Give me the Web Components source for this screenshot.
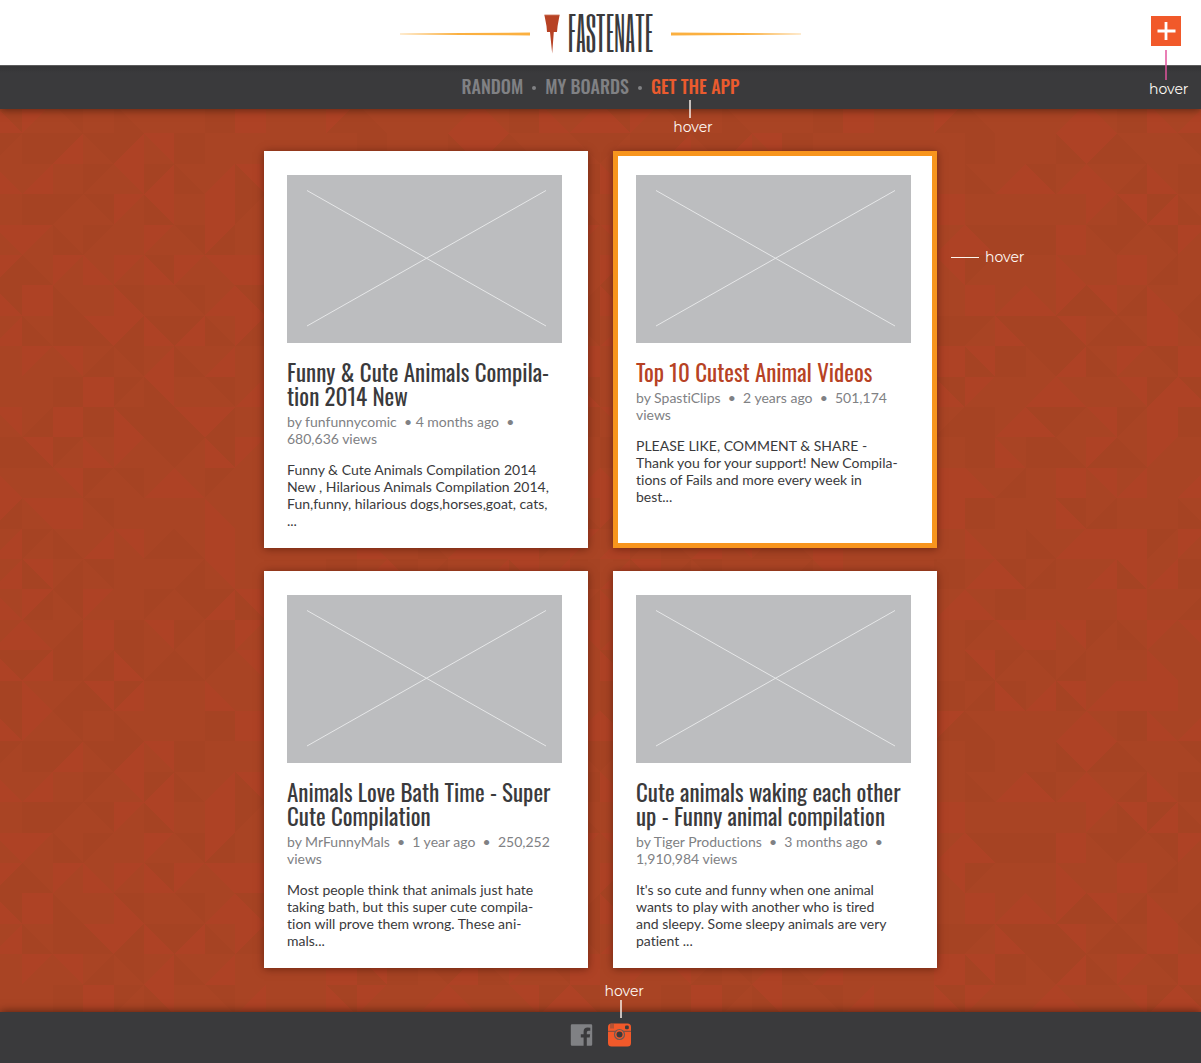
<!DOCTYPE html>
<html lang="en">
<head>
<meta charset="utf-8">
<title>Fastenate</title>
<style>
  html, body { margin: 0; }
  body { font-family: Lato, "Liberation Sans", sans-serif; color: #3a3a3c; }
</style>
</head>
<body>
<fast-page></fast-page>
<script>
const CONDENSED = 'Oswald, "Liberation Sans Narrow", "Roboto Condensed", sans-serif';

function define(name, html, setup) {
  const template = document.createElement('template');
  template.innerHTML = html;
  customElements.define(name, class extends HTMLElement {
    connectedCallback() {
      if (this.shadowRoot) return;
      this.attachShadow({ mode: 'open' }).append(template.content.cloneNode(true));
      if (setup) setup(this, this.shadowRoot);
    }
  });
}

/* Mosaic of triangles, 20 x 20 cells.
   a/b: upper left, lower right.  anb: lower left, upper right.  One letter: plain cell. */
const MOSAIC = [
  'LnD L/M MnD M DnM M M D L M M L/D DnM M M M/L LnM D LnM M/L',
  'D/M D D/L MnD D/L MnL D M M M M M D M M DnL L/D DnM M MnD',
  'LnM M/L M D/M MnL D/L DnM M/L DnL M M M DnM M/L LnD M/L LnM M/D LnM D',
  'M D D/M MnD L/M DnL M L D/M M M L M M M M L/M DnL D/L DnM',
  'MnL L/M DnM D/M M L/M MnD L/D M M M M/L LnD D D L MnD D/M MnD L/M',
  'L/D DnM L/M LnM L/M LnD L/M MnL L M M MnL D/M M M LnM M L M/D M',
  'LnD L DnM M LnD M MnD M/L LnD M M M L M/L LnM L/D DnL M/D LnM M/D',
  'M/L DnM D DnL L/D LnD D/L DnM L/D M M D D/M LnD D DnL M/D DnM L MnD',
  'M L/M MnL M/D MnD M/L DnM M/L M M M L DnL D MnD D/L DnM L/M MnD L',
  'M M D L D/M DnL M MnD M/L M M LnD L/M M M/L LnM M MnL D/L LnD',
  'MnL M/D L D LnD D DnL L/D M M M M/D D M/L LnD D/M MnL D/M L D',
  'D DnL D/M LnM L/M MnD D/M LnD L/M M M M D LnM D DnM L/D DnM L/M M',
  'LnM M MnL D/M MnD M/L LnM D/M M M M L LnM M/D M L MnL M/L M M/L',
  'L/D MnL L MnD M M M LnM M M M L D M M LnD M/D M M DnM',
  'M/L D/M DnM M/L MnL M/D DnM L M M M M LnM M DnM M/L L L D/M L/M',
  'M/L DnL M/D MnD M M M/D MnL M M M D M/L LnD M/D M M/L DnL M/L D',
  'LnM L/D MnD L/M M D/M MnD D/L DnL M M M/L LnM D M M M L M M/D',
  'M/L LnM M/D L D MnL D/M D L/M M M M D/M MnL L MnL D/M DnM L/M MnL',
  'LnD D/L D M/D LnD M/D DnM D/M MnL M M M DnL D/M MnD M/D M M LnM M',
  'D LnM M/D DnL D/L M M LnM M M M D M/D LnD M/L DnL M/L L L M'
];
const SHADES = { D: '#a64323', M: '#a94424', L: '#ae4225' };

function mosaicUrl() {
  let shapes = '';
  MOSAIC.forEach((line, y) => line.split(' ').forEach((cell, x) => {
    const a = SHADES[cell[0]];
    shapes += `<path fill="${a}" d="M${x} ${y}h1v1h-1z"/>`;
    if (cell.length > 1) {
      const d = cell[1] === '/' ? `M${x + 1} ${y}v1h-1z` : `M${x} ${y}h1v1z`;
      shapes += `<path fill="${SHADES[cell[2]]}" d="${d}"/>`;
    }
  }));
  const svg = `<svg xmlns="http://www.w3.org/2000/svg" width="608" height="608" viewBox="0 0 20 20" shape-rendering="crispEdges">${shapes}</svg>`;
  return `url("data:image/svg+xml,${encodeURIComponent(svg)}")`;
}

define('hover-note', `
  <style>
    :host {
      position: absolute; display: flex; flex-direction: column; align-items: center;
      font: 14px/18px Montserrat, Inter, sans-serif; color: #fffaf5; white-space: nowrap;
      --line: rgba(245, 238, 232, .75); pointer-events: none;
    }
    i { background: var(--line); width: 2px; height: var(--length, 18px); margin-right: 6px; }
    :host([side="above"]) { flex-direction: column-reverse; }
    :host([side="right"]) { flex-direction: row; }
    :host([side="right"]) i { width: 28px; height: 1px; background: #fff6ee; }
  </style>
  <i></i><span><slot></slot></span>`);

define('fast-logo', `
  <style>
    :host { display: flex; align-items: center; justify-content: center; }
    .rule { width: 130px; height: 4px; flex: none; }
    a { display: flex; align-items: center; justify-content: center; gap: 8px; width: 141px; color: #3a3a3c; text-decoration: none; }
    .name { font: 45px/40px "Six Caps", ${CONDENSED}; padding: 0 4px 4px 0; }
    .pin { width: 16px; height: 40px; flex: none; }
  </style>
  <svg class="rule" viewBox="0 0 130 4" aria-hidden="true"><path fill="#fbb040" d="M0 1.700 60 1 130 .5v3L60 3 0 2.300z"/></svg>
  <a href="#">
    <svg class="pin" viewBox="0 0 16 40" aria-hidden="true"><path fill="#b74224" d="M.4 1h15.200L13.600 12l-.6 6h-3.200L8.200 39.500 6 18H3L2.500 12z"/><path stroke="#d58a75" stroke-width=".8" d="M.4.900h15.200"/></svg>
    <span class="name">FASTENATE</span>
  </a>
  <svg class="rule" viewBox="0 0 130 4" aria-hidden="true"><path fill="#fbb040" d="M130 1.700 70 1 0 .5v3L70 3l60-.7z"/></svg>`);

define('fast-header', `
  <style>
    :host { display: grid; grid-template-columns: 1fr auto 1fr; height: 65px; background: #fff; }
    fast-logo { grid-column: 2; height: 67px; }
    .add { position: relative; justify-self: end; margin: 16px 20px 0 0; height: 30px; }
    button { display: block; width: 30px; height: 30px; padding: 0; border: 0; background: #f1592a; cursor: pointer; }
    svg { display: block; }
    hover-note { top: 34px; left: -2px; --line: rgba(226, 84, 156, .75); --length: 30px; z-index: 2; }
  </style>
  <fast-logo></fast-logo>
  <div class="add">
    <button aria-label="Add"><svg width="30" height="30" viewBox="0 0 30 30"><path d="M6.500 15h18M15 6v18" stroke="#fff" stroke-width="2.800"/></svg></button>
    <hover-note>hover</hover-note>
  </div>`);

define('fast-nav', `
  <style>
    :host { display: block; position: relative; z-index: 1; background: linear-gradient(#333334, #3a3a3c 8px); box-shadow: 0 1px 8px rgba(40, 15, 5, .6); clip-path: inset(0 0 -30px 0); }
    nav { display: flex; justify-content: center; align-items: center; gap: 9px; height: 43px; border-top: 1px solid #5c5c5d; }
    a { position: relative; font: 500 18px/24px ${CONDENSED}; color: #808184; text-decoration: none; margin-bottom: 4px; }
    a.on { color: #ea5b2e; }
    b { width: 4px; height: 4px; border-radius: 50%; background: #808184; }
    hover-note { top: 26px; left: 50%; margin-left: -22px; }
  </style>
  <nav>
    <a href="#random">RANDOM</a><b></b>
    <a href="#boards">MY BOARDS</a><b></b>
    <a href="#app" class="on">GET THE APP<hover-note>hover</hover-note></a>
  </nav>`);

define('video-card', `
  <style>
    :host { display: block; position: relative; box-sizing: border-box; padding: 24px 26px 19px 23px; background: #fff; box-shadow: 0 1px 8px rgba(60, 15, 0, .55); --title: #3a3a3c; }
    :host([active]) { --title: #b74224; }
    :host([active])::before { content: ""; position: absolute; inset: 0; border: 5px solid #f8951d; pointer-events: none; }
    svg { display: block; width: 100%; background: #bcbdbf; }
    h2 { margin: 17px 0 5px; font: 23px/24px ${CONDENSED}; white-space: nowrap; }
    a { color: var(--title); text-decoration: none; }
    p { margin: 0; font-size: 14px; line-height: 17px; white-space: nowrap; font-variant-ligatures: none; }
    .meta { color: #808184; margin-bottom: 14px; }
    hover-note { left: calc(100% + 14px); top: 97px; }
  </style>
  <svg viewBox="0 0 275 168" role="img" aria-label="Video thumbnail"><path d="M20 15.500 259 151M259 15.500 20 151" stroke="#e6e7e8" fill="none"/></svg>
  <h2><a href="#video"><slot name="title"></slot></a></h2>
  <p class="meta"><slot name="meta"></slot></p>
  <p><slot></slot></p>`,
  (host, root) => {
    if (host.hasAttribute('active')) {
      const note = document.createElement('hover-note');
      note.setAttribute('side', 'right');
      note.textContent = 'hover';
      root.append(note);
    }
  });

define('video-board', `
  <style>
    :host { display: block; flex: 1; padding: 42px 20px 44px; background-color: #a94424; background-position: -8px -6px; }
    main { display: grid; grid-template-columns: repeat(2, 324px); gap: 23px 25px; justify-content: center; }
  </style>
  <main><slot></slot></main>`,
  host => { host.style.backgroundImage = mosaicUrl(); });

define('fast-footer', `
  <style>
    :host { display: block; position: relative; background: #3a3a3c; box-shadow: 0 -1px 8px rgba(40, 15, 5, .6); }
    footer { display: flex; justify-content: center; gap: 15px; height: 40px; padding-top: 11px; }
    a { position: relative; display: block; height: 24px; }
    svg { display: block; }
    hover-note { bottom: 29px; left: 50%; margin-left: -15px; }
  </style>
  <footer>
    <a href="#facebook" aria-label="Facebook">
      <svg width="23" height="24" viewBox="0 0 23 24"><path fill="#808184" d="M2 1.200h19q1.200 0 1.200 1.200v19.200q0 1.200-1.200 1.200h-4.200v-8.300h2.900l.4-3.300h-3.300V9.400q0-1.700 1.700-1.700h1.800V4.800q-1-.2-2.600-.2-4.100 0-4.100 4.200v2.400H10.800v3.300h2.800v8.300H2Q.8 22.800.8 21.600V2.400Q.8 1.200 2 1.200z"/></svg>
    </a>
    <a href="#instagram" aria-label="Instagram">
      <svg width="23" height="24" viewBox="0 0 23 24">
        <rect y=".5" width="23" height="23" rx="3.500" fill="#f1592a"/>
        <path d="M0 8.300h7.500M15.500 8.300H23M3 1v4.500M5 .5v5" stroke="#6b4a42" stroke-width=".9"/>
        <rect x="17" y="2.500" width="3.800" height="3.800" rx="1.200" fill="#3a3a3c"/>
        <circle cx="11.500" cy="11.500" r="5" fill="#f1592a" stroke="#6b5a55" stroke-width="1.200"/>
        <circle cx="11.500" cy="11.500" r="3" fill="#3a3a3c"/>
      </svg>
      <hover-note side="above">hover</hover-note>
    </a>
  </footer>`);

define('fast-page', `
  <style>
    :host { display: flex; flex-direction: column; min-height: 100vh; overflow-x: clip; }
  </style>
  <fast-header></fast-header>
  <fast-nav></fast-nav>
  <video-board>
    <video-card>
      <span slot="title">Funny &amp; Cute Animals Compila-<br>tion 2014 New</span>
      <span slot="meta">by funfunnycomic &nbsp;• 4 months ago &nbsp;•<br>680,636 views</span>
      Funny &amp; Cute Animals Compilation 2014<br>New , Hilarious Animals Compilation 2014,<br>Fun,funny, hilarious dogs,horses,goat, cats,<br>...
    </video-card>
    <video-card active>
      <span slot="title">Top 10 Cutest Animal Videos</span>
      <span slot="meta">by SpastiClips &nbsp;• &nbsp;2 years ago &nbsp;• &nbsp;501,174<br>views</span>
      PLEASE LIKE, COMMENT &amp; SHARE -<br>Thank you for your support! New Compila-<br>tions of Fails and more every week in<br>best...
    </video-card>
    <video-card>
      <span slot="title">Animals Love Bath Time - Super<br>Cute Compilation</span>
      <span slot="meta">by MrFunnyMals &nbsp;• &nbsp;1 year ago &nbsp;• &nbsp;250,252<br>views</span>
      Most people think that animals just hate<br>taking bath, but this super cute compila-<br>tion will prove them wrong. These ani-<br>mals...
    </video-card>
    <video-card>
      <span slot="title">Cute animals waking each other<br>up - Funny animal compilation</span>
      <span slot="meta">by Tiger Productions &nbsp;• &nbsp;3 months ago &nbsp;•<br>1,910,984 views</span>
      It's so cute and funny when one animal<br>wants to play with another who is tired<br>and sleepy. Some sleepy animals are very<br>patient ...
    </video-card>
  </video-board>
  <fast-footer></fast-footer>`);
</script>
</body>
</html>
